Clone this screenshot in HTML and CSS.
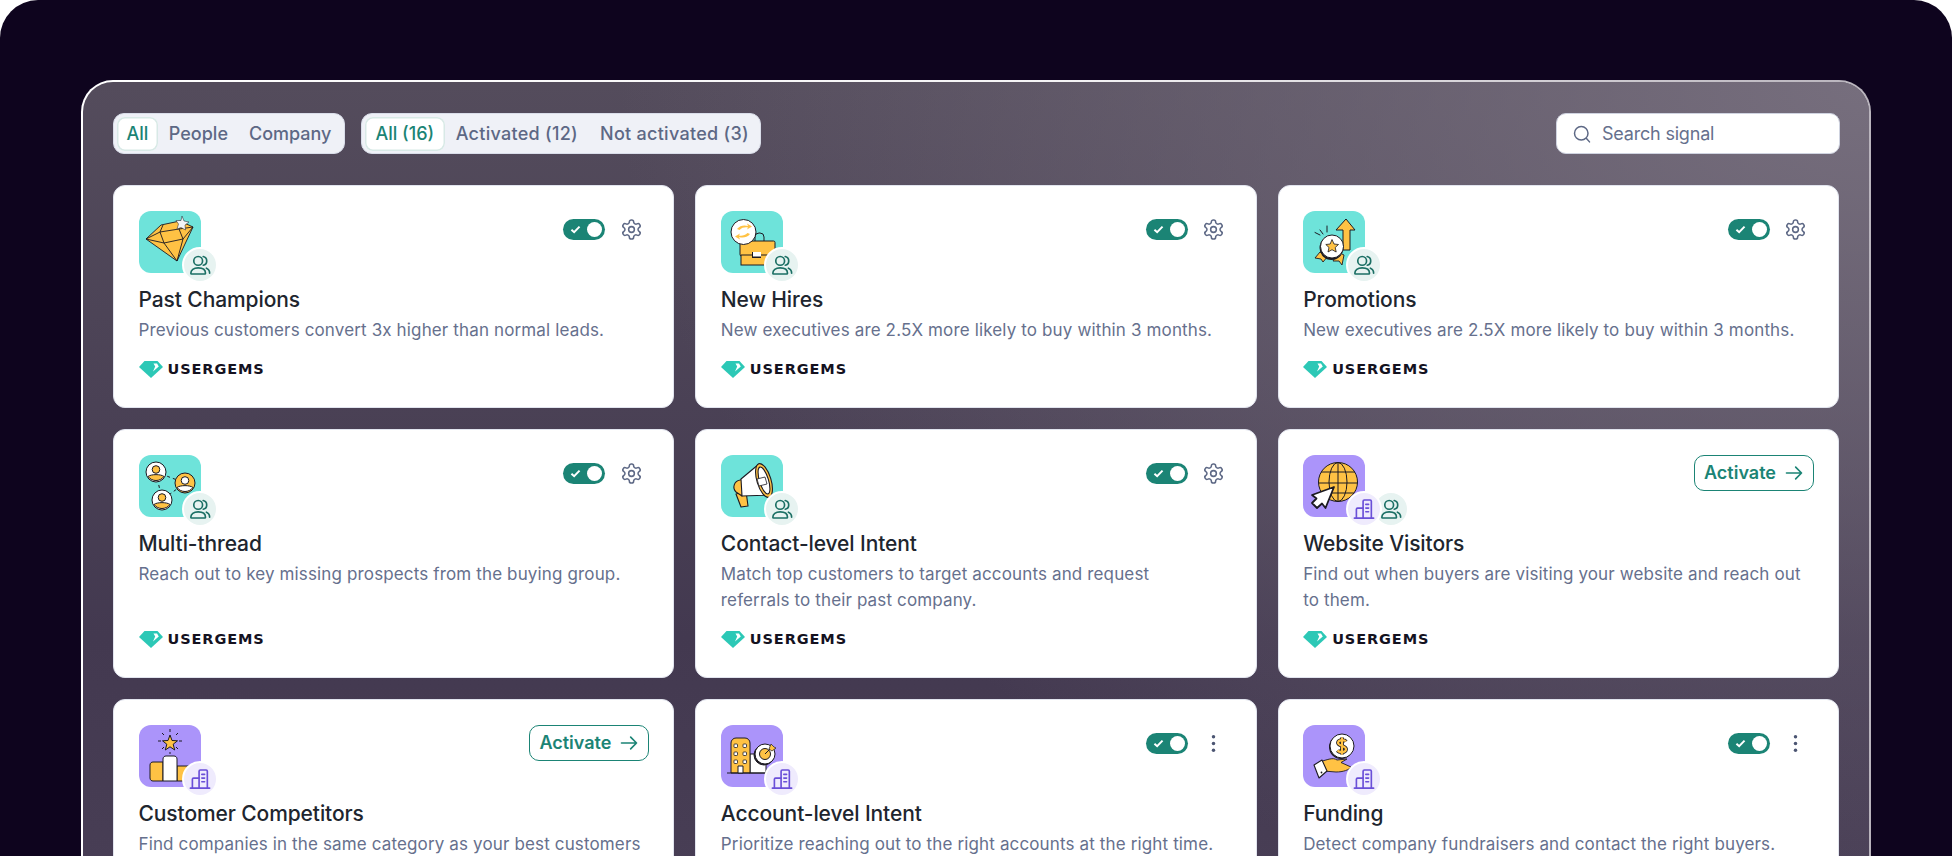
FILE: index.html
```html
<!DOCTYPE html>
<html lang="en">
<head>
<meta charset="utf-8">
<title>Signals</title>
<link rel="stylesheet" href="styles.css">
</head>
<body>
<svg class="defs" xmlns="http://www.w3.org/2000/svg">
  <symbol id="gem" viewBox="0 0 24 17"><path d="M5.500 0H18.500L24 6 12 17 0 6Z" fill="#2cc8b6"/><path d="M14.500 2.500H18L19.800 5.500 14 10.500 16.200 5.500Z" fill="#fff"/></symbol>
  <symbol id="gear" viewBox="0 0 24 24"><path d="M12.220 2h-.44a2 2 0 0 0-2 2v.18a2 2 0 0 1-1 1.730l-.43.25a2 2 0 0 1-2 0l-.15-.08a2 2 0 0 0-2.730.73l-.22.38a2 2 0 0 0 .73 2.730l.15.1a2 2 0 0 1 1 1.720v.51a2 2 0 0 1-1 1.740l-.15.09a2 2 0 0 0-.73 2.730l.22.38a2 2 0 0 0 2.730.73l.15-.08a2 2 0 0 1 2 0l.43.25a2 2 0 0 1 1 1.730V20a2 2 0 0 0 2 2h.44a2 2 0 0 0 2-2v-.18a2 2 0 0 1 1-1.730l.43-.25a2 2 0 0 1 2 0l.15.08a2 2 0 0 0 2.730-.73l.22-.39a2 2 0 0 0-.73-2.730l-.15-.08a2 2 0 0 1-1-1.740v-.5a2 2 0 0 1 1-1.740l.15-.09a2 2 0 0 0 .73-2.730l-.22-.38a2 2 0 0 0-2.730-.73l-.15.08a2 2 0 0 1-2 0l-.43-.25a2 2 0 0 1-1-1.730V4a2 2 0 0 0-2-2z" fill="none" stroke="#5d6885" stroke-width="1.600"/><circle cx="12" cy="12" r="3" fill="none" stroke="#5d6885" stroke-width="1.600"/></symbol>
  <symbol id="kebab" viewBox="0 0 24 24"><circle cx="12" cy="5" r="1.800" fill="#4b5572"/><circle cx="12" cy="12" r="1.800" fill="#4b5572"/><circle cx="12" cy="19" r="1.800" fill="#4b5572"/></symbol>
  <symbol id="users" viewBox="0 0 24 24"><g fill="none" stroke="#1b6f64" stroke-width="1.800" stroke-linecap="round" stroke-linejoin="round"><circle cx="10" cy="7.500" r="4.800"/><path d="M2 21c0-3.600 3-5.800 8-5.800s8 2.200 8 5.800c0 .5-.3.8-.8.8H2.800c-.5 0-.8-.3-.8-.8Z"/><path d="M15.500 2.800a4.800 4.800 0 0 1 0 9.400"/><path d="M19 15.500c2.200.8 3.500 2.600 3.500 5.500"/></g></symbol>
  <symbol id="building" viewBox="0 0 24 24"><g fill="none" stroke="#6a4fd8" stroke-width="1.800" stroke-linecap="round" stroke-linejoin="round"><path d="M1.500 22h21"/><path d="M11 22V3.500c0-.8.5-1.300 1.300-1.300h6.400c.8 0 1.300.5 1.300 1.300V22"/><path d="M11 11H5c-.8 0-1.300.5-1.300 1.300V22"/><path d="M14 7h3M14 11h3M14 15h3"/></g></symbol>
  <symbol id="ill-gem" viewBox="0 0 62 62"><g stroke="#1c1a22" stroke-width=".9" stroke-linejoin="round"><path d="M7 28 22 14 41 10 54 16 38 50Z" fill="#ffc244"/><path d="M7 28 21 21 24 14M21 21 40 18 41 10M40 18 54 16M21 21 25 32 38 50M25 32 44 28M40 18 44 28 38 50M44 28 54 16M25 32 7 28" fill="none"/></g><path d="M43 5 45 10 50 11 46 14 46.500 19 42 16.500 38 18 39.500 13 37 9.500 42 9.500Z" fill="#f2f4f7" stroke="#1c1a22" stroke-width=".5"/></symbol>
  <symbol id="ill-case" viewBox="0 0 62 62"><g stroke="#1c1a22" stroke-width="1"><path d="M34 30v-4a4 4 0 0 1 4-4h1a4 4 0 0 1 4 4v4" fill="none"/><rect x="19" y="30" width="35" height="15" rx="1.500" fill="#ffc244"/><rect x="20" y="44" width="33" height="10" fill="#ffc244"/></g><rect x="31" y="41" width="9" height="6" fill="#1c1a22"/><rect x="32" y="41" width="8" height="4.500" fill="#fff"/><circle cx="22.500" cy="21" r="12.500" fill="#fff" stroke="#1c1a22"/><path d="M16 18c3-4 8-4 11-3l-1-2.500 5 3-5 3 1-2c-3-.5-6 0-8.500 2.500ZM29 23c-3 4-8 4-11 3l1 2.500-5-3 5-3-1 2c3 .5 6 0 8.500-2.500Z" fill="#ffc244"/></symbol>
  <symbol id="ill-promo" viewBox="0 0 62 62"><path d="M33 19 43 8 52 19H47V39H40V19Z" fill="#ffc244" stroke="#1c1a22" stroke-width="1" stroke-linejoin="round"/><path d="M17 41 12 47 18 48 20 51 25 45ZM33 45 30 50 36 50 39 54 41 44 37 42Z" fill="#ffc244" stroke="#1c1a22" stroke-width=".9"/><circle cx="28.500" cy="37" r="12" fill="#1c1a22"/><circle cx="29" cy="35.500" r="11.500" fill="#fff" stroke="#1c1a22"/><path d="M29 28.500 31 33 35.500 33.500 32.200 36.500 33.200 41 29 38.700 25 41 26 36.500 22.800 33.500 27.200 33Z" fill="#ffc244" stroke="#1c1a22" stroke-width=".8"/><path d="M17 19 20 23M24 15V21M12 21.500 17 24" stroke="#1c1a22" stroke-width="1" stroke-linecap="round"/></symbol>
  <symbol id="ill-thread" viewBox="0 0 62 62"><path d="M17 17 46 28 23 45Z" fill="none" stroke="#1c1a22" stroke-width="1" stroke-dasharray="3 3"/><g stroke="#1c1a22" stroke-width="1"><circle cx="17" cy="17" r="10" fill="#fff"/><path d="M9 21.500C12 19 22 19 25 21.500A10 10 0 0 1 9 21.500Z" fill="#ffc244"/><circle cx="17" cy="14.500" r="3.800" fill="#ffc244"/><circle cx="46" cy="28" r="10" fill="#ffc244"/><path d="M38 32.500C41 30 51 30 54 32.500A10 10 0 0 1 38 32.500Z" fill="#fff"/><circle cx="46" cy="25.500" r="3.800" fill="#fff"/><circle cx="23" cy="45" r="10" fill="#fff"/><path d="M15 49.500C18 47 28 47 31 49.500A10 10 0 0 1 15 49.500Z" fill="#ffc244"/><circle cx="23" cy="42.500" r="3.800" fill="#ffc244"/></g></symbol>
  <symbol id="ill-mega" viewBox="0 0 62 62"><g stroke="#1c1a22" stroke-width="1.100" stroke-linejoin="round"><path d="M15 39 20 52 27 51 25 36Z" fill="#ffc244"/><path d="M19 25C13 26 11 33 15 37L21 41 23 24Z" fill="#ffc244"/><path d="M20 24 38 9 50 40 21 41Z" fill="#fff"/><ellipse cx="43" cy="25.500" rx="7" ry="17.500" transform="rotate(-17 43 25.500)" fill="#ffc244"/><ellipse cx="43" cy="25.500" rx="4.500" ry="14" transform="rotate(-17 43 25.500)" fill="#fff"/><path d="M36 24 44 22 46 29 38 31Z" fill="#fff" stroke-width=".8"/></g></symbol>
  <symbol id="ill-globe" viewBox="0 0 62 62"><g fill="none" stroke="#1c1a22" stroke-width="1"><circle cx="35" cy="27" r="19.500" fill="#ffc244"/><ellipse cx="35" cy="27" rx="9" ry="19.500"/><path d="M35 7.500V46.500M15.500 28H54.500M18 17H52M19 38H51"/></g><path d="M31 32 9 40 13.500 43.500 9 48 14 53 19 48.500 22.500 53Z" fill="#fff" stroke="#1c1a22" stroke-width="1.800" stroke-linejoin="round"/></symbol>
  <symbol id="ill-podium" viewBox="0 0 62 62"><g stroke="#1c1a22" stroke-width="1"><path d="M38 41H56V56H38ZM24 37H14C12.500 37 11 38 11 40V53C11 55 12.500 56 14 56H24Z" fill="#ffc244"/><path d="M24 56V34C24 32 25.500 31 27 31H35C36.500 31 38 32 38 34V56Z" fill="#fff"/><path d="M31 10 33 15.500 38.500 15.800 34.200 19.200 35.700 25 31 21.800 26.300 25 27.800 19.200 23.500 15.800 29 15.500Z" fill="#ffc244"/><path d="M31 4V7M31 27V29M19 16H22M40 16H43M23 8 25 10M39 8 37 10M23 24 25 22M39 24 37 22" fill="none"/></g></symbol>
  <symbol id="ill-target" viewBox="0 0 62 62"><g stroke="#1c1a22" stroke-width="1"><rect x="29" y="29" width="16" height="19" fill="#fff"/><path d="M10 48V18a5 5 0 0 1 5-5H24a5 5 0 0 1 5 5V48Z" fill="#ffc244"/><path d="M6 48H45" fill="none"/><path d="M17 48V41H22V48Z" fill="#fff"/><g fill="#fff" stroke-width=".8"><rect x="13" y="19" width="3.500" height="3.500" rx=".8"/><rect x="22" y="19" width="3.500" height="3.500" rx=".8"/><rect x="13" y="27" width="3.500" height="3.500" rx=".8"/><rect x="22" y="27" width="3.500" height="3.500" rx=".8"/><rect x="13" y="35" width="3.500" height="3.500" rx=".8"/><rect x="22" y="35" width="3.500" height="3.500" rx=".8"/></g><circle cx="43" cy="30" r="10" fill="#1c1a22"/><circle cx="44" cy="29" r="10" fill="#fff"/><circle cx="44" cy="29" r="5.500" fill="#ffc244"/><path d="M44 29 50 23" fill="none"/></g><path d="M48 24 50 19 53 22 55 23 51 26Z" fill="#ffc244" stroke="#1c1a22" stroke-width=".7"/></symbol>
  <symbol id="ill-fund" viewBox="0 0 62 62"><circle cx="38" cy="22" r="12" fill="#1c1a22"/><circle cx="39" cy="21" r="12" fill="#fff" stroke="#1c1a22"/><path d="M43 16.500C42 15 36 14 35 17.500C34.500 21 43.500 20.500 43 24.500C42.500 28 36 27.500 34.500 25.500M39 12.500V29.500" fill="none" stroke="#1c1a22" stroke-width="3.800"/><path d="M43 16.500C42 15 36 14 35 17.500C34.500 21 43.500 20.500 43 24.500C42.500 28 36 27.500 34.500 25.500M39 12.500V29.500" fill="none" stroke="#ffc244" stroke-width="2.200"/><path d="M19 36C24 35 30 32 34 35L44 34 38 37.500 48 42C46 45 40 47 33 47L20 46Z" fill="#ffc244" stroke="#1c1a22" stroke-width=".9" stroke-linejoin="round"/><path d="M11 40 19 35 24 46 16 53Z" fill="#fff" stroke="#1c1a22" stroke-width="1.100" stroke-linejoin="round"/><circle cx="18.500" cy="47.500" r=".9" fill="#1c1a22"/></symbol>
</svg>

<div class="screen">
  <main class="panel">
    <div class="toolbar">
      <div class="seg">
        <button class="seg-btn is-on">All</button>
        <button class="seg-btn">People</button>
        <button class="seg-btn">Company</button>
      </div>
      <div class="seg seg-wide">
        <button class="seg-btn is-on">All (16)</button>
        <button class="seg-btn">Activated (12)</button>
        <button class="seg-btn">Not activated (3)</button>
      </div>
      <label class="search">
        <svg class="search-ico" viewBox="0 0 24 24"><circle cx="11" cy="11" r="9" fill="none" stroke="#5d6885" stroke-width="2"/><path d="M18 18 22 22.500" stroke="#5d6885" stroke-width="2" stroke-linecap="round"/></svg>
        <span class="search-text">Search signal</span>
      </label>
    </div>

    <div class="grid">
      <article class="card">
        <div class="head">
          <div class="ill teal"><svg class="ill-svg"><use href="#ill-gem"/></svg><span class="badge badge-p"><svg class="badge-ico"><use href="#users"/></svg></span></div>
          <div class="ctrls"><span class="toggle"><svg class="tick" viewBox="0 0 12 10"><path d="M1.500 5.200 4.500 8 10.500 1.800" fill="none" stroke="#fff" stroke-width="2.200"/></svg><span class="knob"></span></span><span class="icon-btn"><svg class="gear"><use href="#gear"/></svg></span></div>
        </div>
        <h3 class="title">Past Champions</h3>
        <p class="desc">Previous customers convert 3x higher than normal leads.</p>
        <div class="logo"><svg class="gem"><use href="#gem"/></svg><span class="logo-text">USERGEMS</span></div>
      </article>

      <article class="card">
        <div class="head">
          <div class="ill teal"><svg class="ill-svg"><use href="#ill-case"/></svg><span class="badge badge-p"><svg class="badge-ico"><use href="#users"/></svg></span></div>
          <div class="ctrls"><span class="toggle"><svg class="tick" viewBox="0 0 12 10"><path d="M1.500 5.200 4.500 8 10.500 1.800" fill="none" stroke="#fff" stroke-width="2.200"/></svg><span class="knob"></span></span><span class="icon-btn"><svg class="gear"><use href="#gear"/></svg></span></div>
        </div>
        <h3 class="title">New Hires</h3>
        <p class="desc">New executives are 2.5X more likely to buy within 3 months.</p>
        <div class="logo"><svg class="gem"><use href="#gem"/></svg><span class="logo-text">USERGEMS</span></div>
      </article>

      <article class="card">
        <div class="head">
          <div class="ill teal"><svg class="ill-svg"><use href="#ill-promo"/></svg><span class="badge badge-p"><svg class="badge-ico"><use href="#users"/></svg></span></div>
          <div class="ctrls"><span class="toggle"><svg class="tick" viewBox="0 0 12 10"><path d="M1.500 5.200 4.500 8 10.500 1.800" fill="none" stroke="#fff" stroke-width="2.200"/></svg><span class="knob"></span></span><span class="icon-btn"><svg class="gear"><use href="#gear"/></svg></span></div>
        </div>
        <h3 class="title">Promotions</h3>
        <p class="desc">New executives are 2.5X more likely to buy within 3 months.</p>
        <div class="logo"><svg class="gem"><use href="#gem"/></svg><span class="logo-text">USERGEMS</span></div>
      </article>

      <article class="card">
        <div class="head">
          <div class="ill teal"><svg class="ill-svg"><use href="#ill-thread"/></svg><span class="badge badge-p"><svg class="badge-ico"><use href="#users"/></svg></span></div>
          <div class="ctrls"><span class="toggle"><svg class="tick" viewBox="0 0 12 10"><path d="M1.500 5.200 4.500 8 10.500 1.800" fill="none" stroke="#fff" stroke-width="2.200"/></svg><span class="knob"></span></span><span class="icon-btn"><svg class="gear"><use href="#gear"/></svg></span></div>
        </div>
        <h3 class="title">Multi-thread</h3>
        <p class="desc">Reach out to key missing prospects from the buying group.</p>
        <div class="logo"><svg class="gem"><use href="#gem"/></svg><span class="logo-text">USERGEMS</span></div>
      </article>

      <article class="card">
        <div class="head">
          <div class="ill teal"><svg class="ill-svg"><use href="#ill-mega"/></svg><span class="badge badge-p"><svg class="badge-ico"><use href="#users"/></svg></span></div>
          <div class="ctrls"><span class="toggle"><svg class="tick" viewBox="0 0 12 10"><path d="M1.500 5.200 4.500 8 10.500 1.800" fill="none" stroke="#fff" stroke-width="2.200"/></svg><span class="knob"></span></span><span class="icon-btn"><svg class="gear"><use href="#gear"/></svg></span></div>
        </div>
        <h3 class="title">Contact-level Intent</h3>
        <p class="desc">Match top customers to target accounts and request<br>referrals to their past company.</p>
        <div class="logo"><svg class="gem"><use href="#gem"/></svg><span class="logo-text">USERGEMS</span></div>
      </article>

      <article class="card">
        <div class="head">
          <div class="ill purple"><svg class="ill-svg"><use href="#ill-globe"/></svg><span class="badge badge-back badge-p"><svg class="badge-ico"><use href="#users"/></svg></span><span class="badge badge-b"><svg class="badge-ico"><use href="#building"/></svg></span></div>
          <button class="activate">Activate <svg class="arrow" viewBox="0 0 24 24"><path d="M3 12H21M14 5 21 12 14 19" fill="none" stroke="#1b8475" stroke-width="2" stroke-linecap="round" stroke-linejoin="round"/></svg></button>
        </div>
        <h3 class="title">Website Visitors</h3>
        <p class="desc">Find out when buyers are visiting your website and reach out<br>to them.</p>
        <div class="logo"><svg class="gem"><use href="#gem"/></svg><span class="logo-text">USERGEMS</span></div>
      </article>

      <article class="card">
        <div class="head">
          <div class="ill purple"><svg class="ill-svg"><use href="#ill-podium"/></svg><span class="badge badge-b"><svg class="badge-ico"><use href="#building"/></svg></span></div>
          <button class="activate">Activate <svg class="arrow" viewBox="0 0 24 24"><path d="M3 12H21M14 5 21 12 14 19" fill="none" stroke="#1b8475" stroke-width="2" stroke-linecap="round" stroke-linejoin="round"/></svg></button>
        </div>
        <h3 class="title">Customer Competitors</h3>
        <p class="desc">Find companies in the same category as your best customers</p>
      </article>

      <article class="card">
        <div class="head">
          <div class="ill purple"><svg class="ill-svg"><use href="#ill-target"/></svg><span class="badge badge-b"><svg class="badge-ico"><use href="#building"/></svg></span></div>
          <div class="ctrls"><span class="toggle"><svg class="tick" viewBox="0 0 12 10"><path d="M1.500 5.200 4.500 8 10.500 1.800" fill="none" stroke="#fff" stroke-width="2.200"/></svg><span class="knob"></span></span><span class="icon-btn"><svg class="gear"><use href="#kebab"/></svg></span></div>
        </div>
        <h3 class="title">Account-level Intent</h3>
        <p class="desc">Prioritize reaching out to the right accounts at the right time.</p>
      </article>

      <article class="card">
        <div class="head">
          <div class="ill purple"><svg class="ill-svg"><use href="#ill-fund"/></svg><span class="badge badge-b"><svg class="badge-ico"><use href="#building"/></svg></span></div>
          <div class="ctrls"><span class="toggle"><svg class="tick" viewBox="0 0 12 10"><path d="M1.500 5.200 4.500 8 10.500 1.800" fill="none" stroke="#fff" stroke-width="2.200"/></svg><span class="knob"></span></span><span class="icon-btn"><svg class="gear"><use href="#kebab"/></svg></span></div>
        </div>
        <h3 class="title">Funding</h3>
        <p class="desc">Detect company fundraisers and contact the right buyers.</p>
      </article>
    </div>
  </main>
</div>
</body>
</html>
```

FILE: styles.css
```css
* { box-sizing: border-box; }
html, body { margin: 0; height: 856px; overflow: hidden; background: #fff; }
body { font-family: Inter, "Noto Sans", sans-serif; }
.defs { display: none; }

.screen {
  height: 856px;
  overflow: hidden;
  padding: 80px 81px 0;
  background: #0e041e;
  border-radius: 38px 38px 0 0;
}

.panel {
  min-height: 900px;
  padding: 31px 30px 0;
  border: 2px solid transparent;
  border-radius: 32px 32px 0 0;
  background:
    radial-gradient(ellipse 1250px 850px at 100% 0, rgba(120,112,127,.95) 0, rgba(120,112,127,0) 100%) padding-box,
    linear-gradient(180deg, #544c5c 0, #433950 62%, #4a4057 100%) padding-box,
    linear-gradient(90deg, #fff 0, #f4f3f5 55%, #b9b4bd 100%) border-box;
}

.toolbar { display: flex; gap: 16px; align-items: stretch; height: 41px; margin-bottom: 31px; }

.seg {
  display: flex;
  padding: 2.500px;
  background: #eff1f7;
  border: 1px solid #d9dde9;
  border-radius: 11px;
}
.seg-btn {
  padding: 0 10.500px;
  border: 0;
  background: none;
  font: 500 18px/1 Inter, sans-serif;
  letter-spacing: 0;
  color: #5d6885;
  border-radius: 8px;
}
.seg-btn.is-on {
  padding: 0 10px;
  color: #1b8475;
  background: #fff;
  box-shadow: inset 0 0 0 1.500px #d8e9e6;
}
.seg-wide .seg-btn { padding: 0 11px; letter-spacing: .28px; }
.seg-wide .seg-btn.is-on { padding: 0 10.500px; letter-spacing: 0; }
.seg-wide .seg-btn:last-child { padding-right: 8.500px; }

.search {
  display: flex;
  align-items: center;
  gap: 11px;
  width: 284px;
  margin-left: auto;
  margin-right: -1px;
  padding-left: 16px;
  background: #fff;
  border: 1.500px solid #cfd3e0;
  border-radius: 10px;
}
.search-ico { width: 18px; height: 18px; }
.search-text { font-size: 18px; color: #66708d; letter-spacing: -.2px; }

.grid { display: grid; grid-template-columns: repeat(3, 1fr); gap: 21px; }

.card {
  display: flex;
  flex-direction: column;
  padding: 25px 24px 27px 24.500px;
  background: #fff;
  border: 1.500px solid #e1e4ee;
  border-radius: 12px;
}
.head { display: flex; justify-content: space-between; align-items: flex-start; }

.ill { position: relative; width: 62px; height: 62px; border-radius: 12px; }
.teal { background: #6ee3da; }
.purple { background: #ab94fa; }
.ill-svg { display: block; width: 62px; height: 62px; }

.badge {
  position: absolute;
  left: 43px;
  top: 36px;
  display: flex;
  align-items: center;
  justify-content: center;
  width: 36px;
  height: 36px;
  border: 2.500px solid #fff;
  border-radius: 50%;
}
.badge-p { background: #e7f3f1; }
.badge-b { background: #efebfd; }
.badge-back { left: 70px; }
.badge-ico { width: 22px; height: 22px; }

.ctrls { display: flex; align-items: center; gap: 8px; height: 36px; }
.toggle {
  display: flex;
  align-items: center;
  justify-content: space-between;
  width: 42px;
  height: 21px;
  padding: 0 3px 0 7px;
  background: #1b8475;
  border-radius: 11px;
}
.tick { width: 11px; height: 9px; }
.knob { width: 15px; height: 15px; background: #fff; border-radius: 50%; }
.icon-btn { display: flex; align-items: center; justify-content: center; width: 36px; height: 36px; }
.gear { width: 23px; height: 23px; }

.activate {
  display: flex;
  align-items: center;
  gap: 8px;
  height: 36px;
  padding: 0 9px;
  color: #1b8475;
  background: #fff;
  border: 1.500px solid #1b8475;
  border-radius: 10px;
  font: 600 18px/1 Inter, sans-serif;
  letter-spacing: 0;
}
.arrow { width: 20px; height: 20px; }

.title {
  margin: 13px 0 0;
  font-size: 21px;
  line-height: 28px;
  font-weight: 500;
  letter-spacing: -.1px;
  color: #20252e;
}
.desc {
  margin: 3px 0 16px;
  font-size: 17px;
  line-height: 26px;
  font-weight: 400;
  letter-spacing: .14px;
  color: #66708d;
}
.logo { display: flex; align-items: center; gap: 5px; height: 20px; margin-top: auto; margin-bottom: 1px; }
.gem { width: 24px; height: 17px; }
.logo-text { font-family: "DejaVu Sans", sans-serif; font-size: 14.500px; font-weight: 700; letter-spacing: .9px; color: #14121f; }
```
